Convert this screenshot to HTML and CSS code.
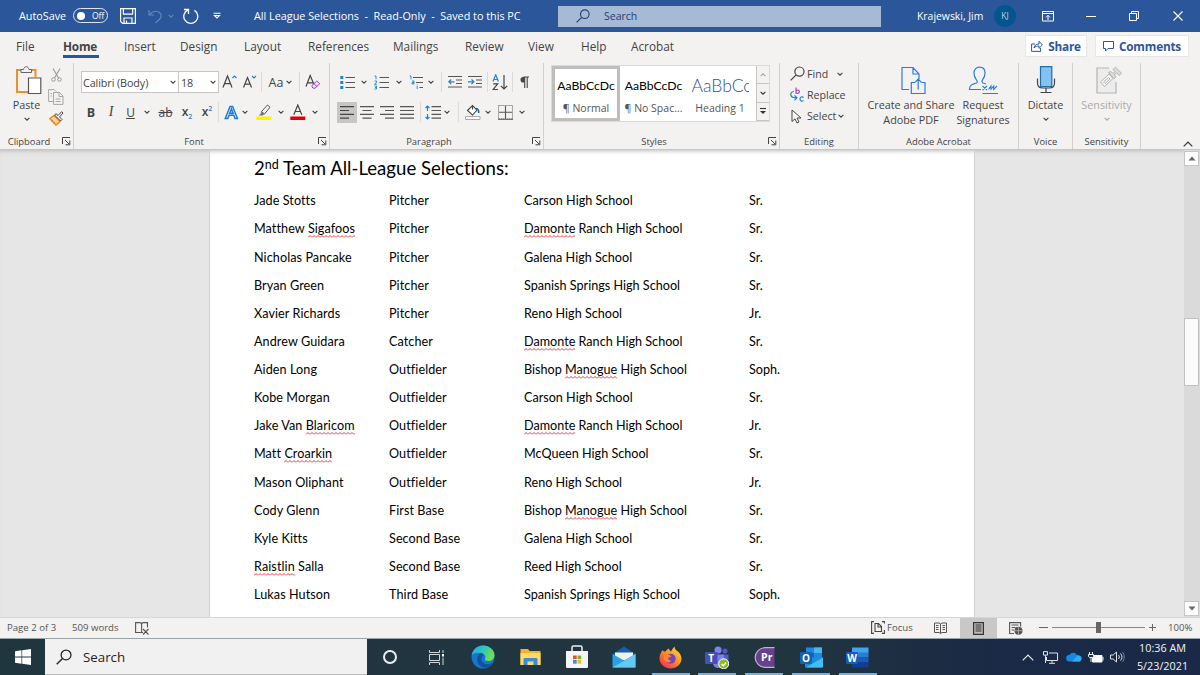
FILE: index.html
```html
<!DOCTYPE html>
<html lang="en">
<head>
    <meta charset="UTF-8">
    <meta name="viewport" content="width=device-width, initial-scale=1.0">
    <title>All League Selections - Word</title>
    <link rel="stylesheet" href="styles.css">
</head>
<body>
    <svg class="defs" width="0" height="0">
        <symbol id="chev" viewBox="0 0 6 6"><path d="M.6 1.8 3 4.2 5.4 1.8" fill="none" stroke="currentColor" stroke-width="1.1"/></symbol>
        <symbol id="launch" viewBox="0 0 9 9"><path d="M.5 7V.5H8M3 3l4 4M7.8 3.5v4.3H3.5" fill="none" stroke="#444" stroke-width="1"/></symbol>
        <symbol id="glass" viewBox="0 0 14 14"><circle cx="8.8" cy="5.2" r="4.3" fill="none" stroke="currentColor" stroke-width="1.1"/><path d="M5.7 8.3.6 13.4" stroke="currentColor" stroke-width="1.2"/></symbol>
    </svg>

    <header class="titlebar">
        <span class="autosave">AutoSave</span>
        <span class="toggle"><i></i>Off</span>
        <svg class="i-save" width="16" height="16" viewBox="0 0 16 16"><path d="M.6.6h14.8v14.8H2.6L.6 13.4zM3.4.6v5.6h9.2V.6M4 15.4V10h8v5.4M6.5 12.5v3" fill="none" stroke="#fff" stroke-width="1.2"/></svg>
        <svg class="i-undo" width="15" height="15" viewBox="0 0 15 15"><path d="M1 1v5h5M1.2 5.8C4 2.5 8 1.2 11 3.2c3 2.1 2.7 5 .5 7L7.5 14" fill="none" stroke="#6285ba" stroke-width="1.2"/></svg>
        <svg class="i-undochev" width="6" height="6"><use href="#chev"/></svg>
        <svg class="i-redo" width="16" height="17" viewBox="0 0 16 17"><path d="M1 1.5h4.5V6M5.3 1.8A7 7 0 1 0 11.5 2.4" fill="none" stroke="#fff" stroke-width="1.3"/></svg>
        <svg class="i-custom" width="8" height="8" viewBox="0 0 8 8"><path d="M.5 1.2h7M1.5 3.5 4 6l2.5-2.5z" fill="none" stroke="#fff" stroke-width="1.1"/></svg>
        <span class="doc-title">All League Selections&nbsp; -&nbsp; Read-Only&nbsp; -&nbsp; Saved to this PC</span>
        <div class="title-search"><svg width="14" height="14"><use href="#glass"/></svg><span>Search</span></div>
        <span class="user">Krajewski, Jim</span>
        <span class="avatar">KJ</span>
        <div class="window-buttons">
            <svg width="12" height="11" viewBox="0 0 12 11"><path d="M.5.5h11v9.5H.5zM.5 2.5h11M6 9V4.5M4 6.3l2-2 2 2" fill="none" stroke="#fff"/></svg>
            <svg width="10" height="10" viewBox="0 0 10 10"><path d="M0 5.5h10" stroke="#fff"/></svg>
            <svg width="10" height="10" viewBox="0 0 10 10"><path d="M.5 2.5h7v7h-7zM2.5 2.5v-2h7v7h-2" fill="none" stroke="#fff"/></svg>
            <svg width="10" height="10" viewBox="0 0 10 10"><path d="m.5.5 9 9m0-9-9 9" stroke="#fff" stroke-width="1.1"/></svg>
        </div>
    </header>

    <nav class="tabs">
        <span>File</span><span class="active">Home</span><span>Insert</span><span>Design</span><span>Layout</span><span>References</span><span>Mailings</span><span>Review</span><span>View</span><span>Help</span><span>Acrobat</span>
        <button class="share"><svg width="12" height="12" viewBox="0 0 12 12"><path d="M4 4H.6v7.4h9V8M3 8c.5-3 2.5-4 5-4V1.2L11.4 5 8 8.3V6C6 6 4.2 6.5 3 8z" fill="none" stroke="#2b579a"/></svg>Share</button>
        <button class="comments"><svg width="11" height="11" viewBox="0 0 11 11"><path d="M.5.5h10v7H5L2.5 10V7.5h-2z" fill="none" stroke="#2b579a"/></svg>Comments</button>
    </nav>

    <section class="ribbon">
        <div class="group clipboard">
            <div class="group-body">
                <div class="big paste">
                    <svg width="27" height="29" viewBox="0 0 27 29"><path d="M6.5 4H2v22h12M16 4h4.5v7" fill="none" stroke="#e8912d" stroke-width="2"/><path d="M6 6.5V3.5h2.5C9 1.5 10 .7 11.3.7S13.5 1.5 14 3.5h2.5v3z" fill="#f3f2f1" stroke="#666"/><path d="M13.5 12h12.3v15.5H13.5z" fill="#fff" stroke="#555" stroke-width="1.2"/></svg>
                    <span>Paste</span>
                    <svg width="6" height="6"><use href="#chev"/></svg>
                </div>
                <div class="clip-tools">
                    <svg width="11" height="14" viewBox="0 0 11 14"><path d="m2 .5 5.5 9.5M9 .5 3.5 10" stroke="#999" stroke-width="1.1"/><circle cx="2.5" cy="11.5" r="1.8" fill="none" stroke="#999"/><circle cx="8.5" cy="11.5" r="1.8" fill="none" stroke="#999"/></svg>
                    <svg width="16" height="16" viewBox="0 0 16 16"><path d="M5 12.5H.6V.6h5.500l2 2M5.500 3.500h6l3.500 3.600v8.300H5.500zM11 3.500v4h4M7.500 10h5M7.500 12.500h5M2.500 4.500H4M2.500 7H4" fill="none" stroke="#a6a6a6"/></svg>
                    <svg width="15" height="15" viewBox="0 0 15 15"><path d="M5 4.500.8 7.500 7 14l4-3.500z" fill="#fbd7a8" stroke="#ed8b1c" stroke-width="1.500"/><path d="m4 9-1.500 1M6 11l-1.500 1.300" stroke="#ed6c00"/><path d="m5.500 4 6 6 1.500-1.500L10.500 6l3.500-4-1.400-1.300L9 4.500 7 2.700z" fill="#f3f2f1" stroke="#444"/></svg>
                </div>
            </div>
            <footer><span>Clipboard</span><svg width="9" height="9"><use href="#launch"/></svg></footer>
        </div>

        <div class="group font">
            <div class="group-body">
                <div class="font-row1">
                    <div class="combo"><span>Calibri (Body)</span><svg width="6" height="6"><use href="#chev"/></svg></div>
                    <div class="combo"><span>18</span><svg width="6" height="6"><use href="#chev"/></svg></div>
                    <svg width="16" height="16" viewBox="0 0 16 16"><path d="m1 13.500 4.500-11.500 4.500 11.500M2.500 9.700h6" fill="none" stroke="#444" stroke-width="1.200"/><path d="m10.500 4 2-2 2 2" fill="none" stroke="#1e84d0" stroke-width="1.100"/></svg>
                    <svg width="16" height="16" viewBox="0 0 16 16"><path d="m1.500 13.500 4-10 4 10M2.900 10.200h5.200" fill="none" stroke="#444" stroke-width="1.200"/><path d="m10 2 2 2 2-2" fill="none" stroke="#1e84d0" stroke-width="1.100"/></svg>
                    <i class="sep"></i>
                    <div class="case"><span>Aa</span><svg width="6" height="6"><use href="#chev"/></svg></div>
                    <i class="sep"></i>
                    <svg width="16" height="16" viewBox="0 0 16 16"><path d="m1 12.500 4.200-11 4 9.500M2.500 8.800h5.500" fill="none" stroke="#444" stroke-width="1.200"/><path d="m7 11.500 4.800-4.500 3 2.700-4.800 4.500H8.200L7 13zM9 9.700l3 2.800" fill="#f3e5f7" stroke="#9b3fb5"/></svg>
                </div>
                <div class="font-row2">
                    <b>B</b><span class="ital">I</span><span class="under">U</span>
                    <svg width="6" height="6"><use href="#chev"/></svg>
                    <s>ab</s>
                    <span class="xs">x<sub>2</sub></span><span class="xs">x<sup>2</sup></span>
                    <i class="sep"></i>
                    <svg width="15" height="15" viewBox="0 0 15 15"><path d="M1.200 13.500 6 1.500h2.600l4.900 12H11l-1.200-3.200H5L3.800 13.500zM5.700 8.300h3.400L7.400 4z" fill="#cfe6f8" stroke="#1c7acc" stroke-width="1.400"/></svg>
                    <svg width="6" height="6"><use href="#chev"/></svg>
                    <svg width="16" height="16" viewBox="0 0 16 16"><path d="M.3 12.500h15V16H.3z" fill="#fff200"/><path d="m5.500 7.500 6-6.500 2.500 2.200L8.500 10z" fill="#f3f2f1" stroke="#555"/><path d="M5 7.500 8.500 10.300 6.500 11.500H2.800L4.800 9.500z" fill="#777"/></svg>
                    <svg width="6" height="6"><use href="#chev"/></svg>
                    <svg width="16" height="16" viewBox="0 0 16 16"><path d="M.3 12.500h15V16H.3z" fill="#e60000"/><path d="m3.800 10.700 4-9.700 4 9.700M5.200 7.500h5.200" fill="none" stroke="#444" stroke-width="1.200"/></svg>
                    <svg width="6" height="6"><use href="#chev"/></svg>
                </div>
            </div>
            <footer><span>Font</span><svg width="9" height="9"><use href="#launch"/></svg></footer>
        </div>

        <div class="group paragraph">
            <div class="group-body">
                <div class="para-row1">
                    <svg width="15" height="15" viewBox="0 0 15 15"><path d="M5.500 2.500H15M5.500 7.500H15M5.500 12.500H15" stroke="#555" stroke-width="1.200"/><path d="M.3 1h3v3h-3zM.3 6h3v3h-3zM.3 11h3v3h-3z" fill="#1e84d0"/></svg>
                    <svg width="6" height="6"><use href="#chev"/></svg>
                    <svg width="15" height="15" viewBox="0 0 15 15"><path d="M5.500 2.500H15M5.500 7.500H15M5.500 12.500H15" stroke="#555" stroke-width="1.200"/><path d="M.6 1H2v3.300M.5 6h2v1.500l-2 1.700h2.300M.5 11h2v3h-2M1 12.500h1.500" fill="none" stroke="#1e84d0" stroke-width=".9"/></svg>
                    <svg width="6" height="6"><use href="#chev"/></svg>
                    <svg width="15" height="15" viewBox="0 0 15 15"><path d="M4 2.500h10M7 7.500h7M10.500 12.500H14" stroke="#555" stroke-width="1.200"/><path d="M.6 1H2v3.300M3 6h2v3H3V7.500h2M8.200 11v3M8.200 9.500v.8" fill="none" stroke="#1e84d0" stroke-width=".9"/></svg>
                    <svg width="6" height="6"><use href="#chev"/></svg>
                    <i class="sep"></i>
                    <svg width="14" height="14" viewBox="0 0 14 14"><path d="M0 1.500h14M8 5h6M8 8.500h6M0 12h14" stroke="#555" stroke-width="1.200"/><path d="M6.500 6.800H1M3.200 4.500.8 6.800l2.400 2.300" fill="none" stroke="#1e84d0" stroke-width="1.200"/></svg>
                    <svg width="14" height="14" viewBox="0 0 14 14"><path d="M0 1.500h14M8 5h6M8 8.500h6M0 12h14" stroke="#555" stroke-width="1.200"/><path d="M0 6.800h5.500M3.500 4.500l2.400 2.300-2.400 2.300" fill="none" stroke="#1e84d0" stroke-width="1.200"/></svg>
                    <i class="sep"></i>
                    <svg width="16" height="17" viewBox="0 0 16 17"><path d="M1 7.500 3.700.8l2.700 6.700M2 5.500h3.500" fill="none" stroke="#1e84d0" stroke-width="1.200"/><path d="M1.200 9.800h4.500L1.200 15.500h4.800M12 1v14M8.800 11.800 12 15l3.200-3.200" fill="none" stroke="#444" stroke-width="1.200"/></svg>
                    <i class="sep"></i>
                    <svg width="9" height="13" viewBox="0 0 9 13"><path d="M4.500 1H3.300a2.600 2.600 0 0 0 0 5.600h1.200z" fill="#444"/><path d="M4.700 1v11M7.200 1v11M3.500 1H9" stroke="#444" stroke-width="1.100"/></svg>
                </div>
                <div class="para-row2">
                    <span class="pressed"><svg width="14" height="13" viewBox="0 0 14 13"><path d="M0 .7h14M0 4.500h9M0 8.300h14M0 12.100h9" stroke="#444" stroke-width="1.200"/></svg></span>
                    <svg width="14" height="13" viewBox="0 0 14 13"><path d="M0 .7h14M2.500 4.500h9M0 8.300h14M2.500 12.100h9" stroke="#555" stroke-width="1.200"/></svg>
                    <svg width="14" height="13" viewBox="0 0 14 13"><path d="M0 .7h14M5 4.500h9M0 8.300h14M5 12.100h9" stroke="#555" stroke-width="1.200"/></svg>
                    <svg width="14" height="13" viewBox="0 0 14 13"><path d="M0 .7h14M0 4.500h14M0 8.300h14M0 12.100h14" stroke="#555" stroke-width="1.200"/></svg>
                    <i class="sep"></i>
                    <svg width="16" height="15" viewBox="0 0 16 15"><path d="M6.500 1.700H16M6.500 5.500H16M6.500 9.300H16M6.500 13.100H16" stroke="#555" stroke-width="1.200"/><path d="M2.500 1v5M2.500 9v5M.5 3l2-2 2 2M.5 12l2 2 2-2" fill="none" stroke="#1e84d0" stroke-width="1.200"/></svg>
                    <svg width="6" height="6"><use href="#chev"/></svg>
                    <i class="sep"></i>
                    <svg width="16" height="16" viewBox="0 0 16 16"><path d="M.5 12.500h14.500V15.500H.5z" fill="#fff" stroke="#aaa"/><path d="m2.500 6.500 5-5 4.500 4.500-4.500 5zM7.500 5.500V1" fill="#fff" stroke="#444" stroke-width="1.100"/><path d="M11 4.500c2 0 3 2 2.700 4.500" fill="none" stroke="#1a6c8c" stroke-width="1.600"/></svg>
                    <svg width="6" height="6"><use href="#chev"/></svg>
                    <svg width="15" height="15" viewBox="0 0 15 15"><path d="M.5.500h14v13.500H.5z" fill="none" stroke="#777" stroke-dasharray="1.200 .8"/><path d="M7.500 1v13M1 7.300h13M0 14.300h15" stroke="#555" stroke-width="1.100"/></svg>
                    <svg width="6" height="6"><use href="#chev"/></svg>
                </div>
            </div>
            <footer><span>Paragraph</span><svg width="9" height="9"><use href="#launch"/></svg></footer>
        </div>

        <div class="group styles">
            <div class="group-body">
                <div class="gallery">
                    <div class="style selected"><span class="sample">AaBbCcDc</span><span class="name">¶ Normal</span></div>
                    <div class="style"><span class="sample">AaBbCcDc</span><span class="name">¶ No Spac...</span></div>
                    <div class="style heading"><span class="sample">AaBbCc</span><span class="name">Heading 1</span></div>
                    <div class="gallery-scroll">
                        <span class="dim"><svg class="up" width="6" height="6"><use href="#chev"/></svg></span>
                        <span><svg width="6" height="6"><use href="#chev"/></svg></span>
                        <span><svg width="8" height="8" viewBox="0 0 8 8"><path d="M1 1.500h6" stroke="#333" stroke-width="1.100"/><path d="M1 4h6L4 7z" fill="#333"/></svg></span>
                    </div>
                </div>
            </div>
            <footer><span>Styles</span><svg width="9" height="9"><use href="#launch"/></svg></footer>
        </div>

        <div class="group editing">
            <div class="group-body">
                <div><svg width="15" height="15"><use href="#glass"/></svg><span>Find</span><svg class="far" width="6" height="6"><use href="#chev"/></svg></div>
                <div><svg width="15" height="15" viewBox="0 0 15 15"><path d="M6 .5v6.300M6 4a1.800 1.600 0 1 1 0 1.500" fill="none" stroke="#b146c2" stroke-width="1.200"/><path d="M13.500 10.500c-1.500-1.300-3.500-.5-3.500 1.500s2 2.800 3.500 1.500M4 4.500C1 4.500.5 7 1 8.500c.5 2 3 2.300 5.500 2.300M4.500 8.300 7 10.800l-2.500 2.500" fill="none" stroke="#1e84d0" stroke-width="1.200"/></svg><span>Replace</span></div>
                <div><svg width="15" height="15" viewBox="0 0 15 15"><path d="M2 1v11.500l3-2.700 2 4.200 2-1-2-4h4z" fill="#fff" stroke="#444"/></svg><span>Select</span><svg width="6" height="6"><use href="#chev"/></svg></div>
            </div>
            <footer><span>Editing</span></footer>
        </div>

        <div class="group acrobat">
            <div class="group-body">
                <div class="big create">
                    <svg width="25" height="29" viewBox="0 0 25 29"><path d="M8 23.500H1V1.500h11l6 6.500v5M12 1.500V8h6M14 16.500h-3.700v11H24v-11h-3.700M17.200 23.500v-10M14 16.300l3.200-3.200 3.200 3.200" fill="none" stroke="#2c7be5" stroke-width="1.200"/></svg>
                    <span>Create and Share<br>Adobe PDF</span>
                </div>
                <div class="big request">
                    <svg width="31" height="29" viewBox="0 0 31 29"><path d="M13 23.500H1.500c0-5 3-5 7-6.500 1-.5 1-2-.2-3.300C7 12 6 10 6 7c0-3.500 2-5.800 5.500-5.800S17 3.500 17 7s-1 5-2.400 6.700c-1 1.300-.8 2.800.4 3.300l3 1" fill="none" stroke="#2c7be5" stroke-width="1.200"/><path d="m14.500 20 4.500 4m0-4-4.500 4M20.500 23.500l2.500-3.500v3.300l2.700-3.300v3.300l3.300-3.300M14.500 27.500H30" fill="none" stroke="#2c7be5" stroke-width="1.100"/></svg>
                    <span>Request<br>Signatures</span>
                </div>
            </div>
            <footer><span>Adobe Acrobat</span></footer>
        </div>

        <div class="group voice">
            <div class="group-body">
                <div class="big">
                    <svg width="20" height="29" viewBox="0 0 20 29"><path d="M1.500 12.500v4.500c0 3 2 5 5 5h7c3 0 5-2 5-5v-4.500M10 22v4M4.500 26.500h11" fill="none" stroke="#444" stroke-width="1.200"/><path d="M4.500.7h11.300v20H4.500z" fill="#83c3ee" stroke="#1e6fad" stroke-width="1.200"/></svg>
                    <span>Dictate</span>
                    <svg width="6" height="6"><use href="#chev"/></svg>
                </div>
            </div>
            <footer><span>Voice</span></footer>
        </div>

        <div class="group sensitivity">
            <div class="group-body">
                <div class="big">
                    <svg width="27" height="29" viewBox="0 0 27 29"><path d="M13 2H1v25h19V16" fill="#ececec" stroke="#b3b3b3" stroke-width="1.200"/><path d="m4.500 16 8.500-8 4 4.500-8.500 8zM7.500 16l5-4.500 1.500 1.500-5 4.500z" fill="#f7f7f7" stroke="#b3b3b3"/><path d="m12.500 6.500 5.500 6 2-1.800-1.500-2 2-2 2.500 2.800 2.500-2.300-6-6-2.500 2.300 2 2-2 2-2-2z" fill="#ddd" stroke="#b3b3b3"/></svg>
                    <span>Sensitivity</span>
                    <svg width="6" height="6"><use href="#chev"/></svg>
                </div>
            </div>
            <footer><span>Sensitivity</span></footer>
        </div>
        <svg class="collapse" width="10" height="6" viewBox="0 0 10 6"><path d="m.7 5.300 4.300-4.300 4.300 4.300" fill="none" stroke="#333" stroke-width="1.200"/></svg>
    </section>

    <main class="workspace">
        <article class="page">
            <h1>2<sup>nd</sup> Team All-League Selections:</h1>
            <div class="roster">
                <div><span>Jade Stotts</span><span>Pitcher</span><span>Carson High School</span><span>Sr.</span></div>
                <div><span>Matthew <u>Sigafoos</u></span><span>Pitcher</span><span><u>Damonte</u> Ranch High School</span><span>Sr.</span></div>
                <div><span>Nicholas Pancake</span><span>Pitcher</span><span>Galena High School</span><span>Sr.</span></div>
                <div><span>Bryan Green</span><span>Pitcher</span><span>Spanish Springs High School</span><span>Sr.</span></div>
                <div><span>Xavier Richards</span><span>Pitcher</span><span>Reno High School</span><span>Jr.</span></div>
                <div><span>Andrew Guidara</span><span>Catcher</span><span><u>Damonte</u> Ranch High School</span><span>Sr.</span></div>
                <div><span>Aiden Long</span><span>Outfielder</span><span>Bishop <u>Manogue</u> High School</span><span>Soph.</span></div>
                <div><span>Kobe Morgan</span><span>Outfielder</span><span>Carson High School</span><span>Sr.</span></div>
                <div><span>Jake Van <u>Blaricom</u></span><span>Outfielder</span><span><u>Damonte</u> Ranch High School</span><span>Jr.</span></div>
                <div><span>Matt <u>Croarkin</u></span><span>Outfielder</span><span>McQueen High School</span><span>Sr.</span></div>
                <div><span>Mason Oliphant</span><span>Outfielder</span><span>Reno High School</span><span>Jr.</span></div>
                <div><span>Cody Glenn</span><span>First Base</span><span>Bishop <u>Manogue</u> High School</span><span>Sr.</span></div>
                <div><span>Kyle Kitts</span><span>Second Base</span><span>Galena High School</span><span>Sr.</span></div>
                <div><span><u>Raistlin</u> Salla</span><span>Second Base</span><span>Reed High School</span><span>Sr.</span></div>
                <div><span>Lukas Hutson</span><span>Third Base</span><span>Spanish Springs High School</span><span>Soph.</span></div>
            </div>
        </article>
        <div class="scrollbar">
            <span class="arrow"><svg width="8" height="5"><path d="M.5 4.500 4 .5l3.500 4z" fill="#666"/></svg></span>
            <span class="thumb"></span>
            <span class="arrow"><svg width="8" height="5"><path d="M.5.5 4 4.500 7.500.5z" fill="#666"/></svg></span>
        </div>
    </main>

    <div class="statusbar">
        <span class="pages">Page 2 of 3</span>
        <span class="words">509 words</span>
        <svg class="proof" width="14" height="13" viewBox="0 0 14 13"><path d="M8 10.500H.6V.6h4c1.500 0 2 .6 2 1.500v8M6.600 2.100c0-1 .6-1.500 2-1.500H12.500V5.500M8 7l5.500 5.500m0-5.500L8 12.500" fill="none" stroke="#555" stroke-width="1.100"/></svg>
        <span class="focus"><svg width="14" height="13" viewBox="0 0 14 13"><path d="M3 .6H.6V12.400H3M11 .6h2.400v2M13.400 9v3.400H11M4 2.500h3.500L10.500 5.500v5H4zM7 2.500V6h3.500" fill="none" stroke="#444" stroke-width="1.100"/></svg>Focus</span>
        <svg class="read" width="13" height="12" viewBox="0 0 13 12"><path d="M.5 1h4.500l1.500.8L8 1h4.500v9.500H8l-1.500 1-1.500-1H.5zM6.500 2v9M2 3.500h2.500M2 5.500h2.500M2 7.500h2.500M8.500 3.500H11M8.500 5.500H11M8.500 7.500H11" fill="none" stroke="#555"/></svg>
        <span class="print"><svg width="11" height="13" viewBox="0 0 11 13"><path d="M.6.6h9.800v11.800H.6z" fill="#bbb" stroke="#333" stroke-width="1.200"/><path d="M2.500 3h6M2.500 5h6M2.500 7h6M2.500 9h6" stroke="#333" stroke-width="1.200"/></svg></span>
        <svg class="web" width="14" height="13" viewBox="0 0 14 13"><path d="M5 11.500H.6V.6h11v4M2.500 3h7M2.500 5.500h4M2.500 8h2.500" fill="none" stroke="#555" stroke-width="1.100"/><circle cx="9.500" cy="8.700" r="4" fill="#555"/><path d="M5.500 8.700h8M9.500 4.700v8" stroke="#bbb" stroke-width=".7"/></svg>
        <span class="zoom">
            <svg width="9" height="9"><path d="M0 4.500h9" stroke="#666"/></svg>
            <span class="slider"><i></i></span>
            <svg width="7" height="7"><path d="M0 3.500h7M3.500 0v7" stroke="#666"/></svg>
        </span>
        <span class="percent">100%</span>
    </div>

    <div class="taskbar">
        <span class="start"><svg width="16" height="16" viewBox="0 0 16 16"><path d="M0 2.300 6.500 1.300V7.600H0zM7.200 1.200 16 0v7.600H7.200zM0 8.400h6.500v6.300L0 13.700zM7.200 8.400H16V16l-8.800-1.200z" fill="#fff"/></svg></span>
        <div class="task-search"><svg width="16" height="16"><use href="#glass"/></svg><span>Search</span></div>
        <div class="apps">
            <span><svg width="16" height="16"><circle cx="8" cy="8" r="6" fill="none" stroke="#eee" stroke-width="2"/></svg></span>
            <span><svg width="16" height="15" viewBox="0 0 16 15"><path d="M.5 0v2.500h10V0M.5 15v-2.500h10V15M.5 4.500h10v6H.5zM14 0v3M14 7.500V15" fill="none" stroke="#cfd6d9"/><path d="M13 4h2v2.500h-2z" fill="#fff"/></svg></span>
            <span><svg width="24" height="24" viewBox="0 0 24 24"><defs><linearGradient id="eg" x1="0" y1="0" x2="1" y2=".4"><stop offset="0" stop-color="#2aa5e0"/><stop offset=".5" stop-color="#2cc4c4"/><stop offset="1" stop-color="#6fe04b"/></linearGradient></defs><circle cx="12" cy="12" r="11.500" fill="#1277cf"/><path d="M.8 10C2 4 6.500.5 12 .5c6.500 0 11.500 4.500 11.500 9.500 0 4-3 6-6 6s-4-1-3.500-2.300c.8-1 .8-5.200-4-5.700C6 7.500 2.500 8.500.8 10z" fill="url(#eg)"/><path d="M10 8c-4 2-5 7-2.500 11 2 3 6 4.500 9 3.500 2-.7 4-2.500 5-4.500-4 2-8 1.500-10-1-2-2.600-1-5 .8-6.500C12 9 11 8.200 10 8z" fill="#12519d"/></svg></span>
            <span><svg width="21" height="18" viewBox="0 0 21 18"><path d="M.5 1H8l1.500 2h11v14H.5z" fill="#f0b429"/><path d="M.5 5h20v12H.5z" fill="#ffd970"/><path d="M3.500 17v-5.500c0-1 .5-1.500 1.500-1.500h11c1 0 1.500.5 1.500 1.500V17h-4v-3.500h-6V17z" fill="#3c8cd0"/></svg></span>
            <span><svg width="24" height="24" viewBox="0 0 24 24"><path d="M7 6V2.500C7 1.500 7.500 1 8.500 1h7c1 0 1.500.5 1.500 1.500V6" fill="none" stroke="#eee" stroke-width="1.500"/><path d="M1 6h22v15.500c0 1-.5 1.500-1.500 1.500h-19C1.500 23 1 22.500 1 21.500z" fill="#f5f5f5"/><path d="M8 10.500h3.700v3.700H8z" fill="#e8502a"/><path d="M12.500 10.500h3.700v3.700h-3.700z" fill="#7cb526"/><path d="M8 15h3.700v3.700H8z" fill="#2a9be0"/><path d="M12.500 15h3.700v3.700h-3.700z" fill="#f5b91d"/></svg></span>
            <span><svg width="24" height="22" viewBox="0 0 24 22"><path d="M.5 8 12 .5 23.500 8v3H.5z" fill="#155fae"/><path d="M3 6.500h18V14H3z" fill="#f1f1ee"/><path d="M.5 8 12 14.500l11.500-6.500V21.500H.5z" fill="#29a1e8"/><path d="m.5 21.500 23-13.500v13.500z" fill="#64c8f5"/></svg></span>
            <span class="open"><svg width="23" height="23" viewBox="0 0 23 23"><defs><linearGradient id="ff" x1="1" y1="0" x2=".2" y2="1"><stop offset="0" stop-color="#ffe840"/><stop offset=".45" stop-color="#ff9a22"/><stop offset="1" stop-color="#f22d59"/></linearGradient></defs><path d="M3.500 4c.5 1 1.500 1.500 3 1.500C7.500 4 8.500 3 10 2.500c0 1.300.8 2 2 3C13 4 13.500 2.500 15.500.5c0 2 1 3 2 4C19 5.500 22.500 8 22.500 13S17.500 22.500 11.500 22.500.5 18 .5 12.500c0-3.500 1-5 3-8.500z" fill="url(#ff)"/><circle cx="11.700" cy="12.800" r="5" fill="#7643c9"/><path d="M5 9c3-2 6 0 7.500 1.500l-3 1c-1 1.500.5 3.500 3 3-2 3-7 2-7.500-2z" fill="#ff8a24"/></svg></span>
            <span class="open"><svg width="24" height="23" viewBox="0 0 24 23"><circle cx="13" cy="4" r="3.600" fill="#7b83eb"/><circle cx="20" cy="5" r="2.500" fill="#5059c9"/><path d="M16 8.500h7.500v7c0 3-2 4-4 4z" fill="#5059c9"/><path d="M8 8.500h11V17c0 3.500-2.500 5-5.500 5S8 20 8 17z" fill="#7b83eb"/><rect x="0" y="6" width="12.500" height="12" rx="1" fill="#464eb8"/><text x="6.200" y="15.500" text-anchor="middle" class="logo">T</text><circle cx="18.700" cy="17.800" r="5" fill="#8cbd18" stroke="#fff"/><path d="m16.500 18 1.700 1.700 3-3.200" fill="none" stroke="#fff" stroke-width="1.300"/></svg></span>
            <span class="open"><svg width="21" height="21" viewBox="0 0 21 21"><path d="M20.500.7H11A9.800 9.800 0 0 0 11 20.300h9.500z" fill="#66418c"/><path d="M20.500.7H11A9.800 9.800 0 0 0 11 20.300h9.500" fill="none" stroke="#c8afd6" stroke-width="1.200"/><text x="12.800" y="14.300" text-anchor="middle" class="logo pr">Pr</text></svg></span>
            <span class="open outlook"><svg width="23" height="21" viewBox="0 0 23 21"><path d="M6 .5h16v11H6z" fill="#1c8ae0"/><path d="M14 .5h8V6h-8z" fill="#4db4f2"/><path d="M6 6h8v5.500H6z" fill="#1467b5"/><path d="M5 10.500h18v8.500c0 1-.5 1.500-1.500 1.500H5z" fill="#1b8ddf"/><path d="m23 10.500-17 10h15.500c1 0 1.500-.5 1.500-1.500z" fill="#45bcf2"/><rect x="0" y="5" width="12" height="12" rx="1" fill="#0f62b4"/><text x="6" y="14.600" text-anchor="middle" class="logo">O</text></svg></span>
            <span class="open"><svg width="23" height="21" viewBox="0 0 23 21"><path d="M6 .5h16.500V6H6z" fill="#41a5ee"/><path d="M6 5.500h16.500v5H6z" fill="#2b7cd3"/><path d="M6 10.500h16.500v5H6z" fill="#185abd"/><path d="M6 15.500h16.500v5H6z" fill="#103f91"/><rect x="0" y="5" width="12" height="12" rx="1" fill="#185abd"/><text x="6" y="14.500" text-anchor="middle" class="logo">W</text></svg></span>
        </div>
        <div class="tray">
            <svg width="12" height="7" viewBox="0 0 12 7"><path d="m.7 6.300 5.300-5.300 5.300 5.300" fill="none" stroke="#e6e9ed" stroke-width="1.200"/></svg>
            <svg width="15" height="13" viewBox="0 0 15 13"><path d="M6 2h8.500v7.500H3.500V6M9 9.500v2.500M6 12.300h6M.5.600h4v3.500h-4zM2.500 4v8" fill="none" stroke="#dfe3e8"/></svg>
            <svg width="16" height="10" viewBox="0 0 16 10"><path d="M3.500 9.500a3.200 3.200 0 0 1-.3-6.400C4.500.8 8.500-.7 11 3c3 0 4.700 1.500 4.500 3.700-.2 2-1.500 2.800-3 2.800z" fill="#1688df"/><path d="m6 9.500 5.500-6C14 3.300 15.700 4.500 15.500 6.700c-.2 2-1.500 2.800-3 2.800z" fill="#35a9f2"/></svg>
            <svg width="16" height="11" viewBox="0 0 16 11"><path d="M4.500 3.500h9.500v6.500H4.500z" fill="#fff" stroke="#fff"/><path d="M15 5v3.500M1.500 0v2.500M4.500 0v2.500M.5 2.500h5v2c0 1.500-5 1.500-5 0zM3 6v4" stroke="#e6e9ed" fill="#22324d"/></svg>
            <svg width="15" height="12" viewBox="0 0 15 12"><path d="M.5 4h2.700L6.500 1v10L3.200 8H.5zM8.500 4c1 1.200 1 2.800 0 4M10.500 2.500c2 2 2 5 0 7" fill="none" stroke="#dfe3e8"/><path d="M12.500 1c2.300 2.800 2.300 7.200 0 10" fill="none" stroke="#78849a"/></svg>
        </div>
        <div class="clock"><span>10:36 AM</span><span>5/23/2021</span></div>
    </div>
</body>
</html>
```

FILE: styles.css
```css
* {
    box-sizing: border-box;
}
body {
    margin: 0;
    width: 1200px;
    height: 675px;
    overflow: hidden;
    display: grid;
    grid-template-rows: 32px 31px 87px 467px 21px 37px;
    font-family: "Open Sans", "Noto Sans", sans-serif;
    color: #444;
    background-color: #e6e6e6;
    white-space: nowrap;
}
svg {
    display: block;
    flex: none;
}
.defs {
    position: absolute;
}
i {
    font-style: normal;
}

/* title bar */
.titlebar {
    display: grid;
    grid-template-columns: 54px 47px 28px 20px 15px 30px 41px 304px 359px 66px 43px 171px;
    padding-left: 19px;
    align-items: center;
    background-color: #2b579a;
    color: #fff;
    font-size: 10.8px;
    line-height: 14px;
}
.titlebar > span {
    margin-top: -1px;
}
.titlebar .user {
    font-size: 10.4px;
    margin-top: 0;
}
.toggle {
    width: 35px;
    height: 15px;
    border: 1px solid #dfe6f1;
    border-radius: 8px;
    display: flex;
    align-items: center;
    gap: 7px;
    padding-left: 3px;
    font-size: 8.5px;
}
.toggle i {
    width: 8px;
    height: 8px;
    border-radius: 50%;
    background-color: #fff;
}
.i-undochev {
    color: #6285ba;
}
.title-search {
    width: 323px;
    height: 21px;
    background-color: #a6b9d5;
    color: #1f3f75;
    display: flex;
    align-items: center;
    gap: 14px;
    padding-left: 18px;
    font-size: 10.5px;
}
.avatar {
    width: 22px;
    height: 22px;
    border-radius: 50%;
    background-color: #01568f;
    color: #b9d3ea;
    font-size: 8.5px;
    line-height: 22px;
    text-align: center;
    margin-left: 11px;
}
.window-buttons {
    display: grid;
    grid-template-columns: repeat(4, 43.3px);
    justify-items: center;
    align-items: center;
}

/* ribbon tabs */
.tabs {
    display: grid;
    grid-template-columns: 47px 61px 56px 64px 64px 85px 72px 63px 53px 50px 394px 70px 94px;
    padding-left: 16px;
    background-color: #f3f2f1;
    font-size: 11.8px;
    line-height: 29px;
}
.tabs .active {
    font-weight: 700;
    letter-spacing: -0.2px;
    width: 36px;
    height: 26px;
    border-bottom: 3px solid #2b579a;
}
.tabs button {
    height: 22px;
    margin-top: 3px;
    padding: 0;
    border: 1px solid #e6e6e6;
    background-color: #fff;
    color: #2b579a;
    font: 700 11.8px "Open Sans", sans-serif;
    letter-spacing: -0.2px;
    display: flex;
    align-items: center;
    justify-content: center;
    gap: 5px;
}
.share {
    width: 62px;
}

/* ribbon */
.ribbon {
    display: flex;
    background-color: #f3f2f1;
    border-bottom: 1px solid #c8c6c4;
    font-size: 10.8px;
}
.group {
    display: flex;
    flex-direction: column;
    border-right: 1px solid #d2d0ce;
    padding-bottom: 1px;
}
.group-body {
    flex: 1;
}
.group footer {
    height: 14px;
    display: flex;
    align-items: center;
    justify-content: center;
    font-size: 9.4px;
}
.group footer span {
    flex: 1;
    text-align: center;
}
.group footer svg {
    margin: 0 2px 0 4px;
}
.sep {
    width: 1px;
    height: 20px;
    background-color: #dcdad8;
}
.clipboard { width: 74px; }
.font { width: 256px; }
.paragraph { width: 214px; }
.styles { width: 236px; }
.editing { width: 79px; }
.acrobat { width: 160px; }
.voice { width: 54px; }
.sensitivity { width: 68px; }

.big {
    display: flex;
    flex-direction: column;
    align-items: center;
    text-align: center;
    line-height: 15px;
    padding-top: 3px;
}
.big > svg:first-child {
    margin-bottom: 2px;
}
.big span + svg {
    margin-top: 4px;
}
.clipboard .group-body {
    display: flex;
}
.paste {
    width: 45px;
    padding-left: 8px;
}
.paste > svg:first-child {
    margin-left: 4px;
}
.clip-tools {
    width: 22px;
    display: grid;
    grid-template-rows: 22px 22px 21px;
    padding-top: 1px;
    justify-items: center;
    align-items: center;
}
.font .group-body {
    padding: 4px 0 0 7px;
}
.font-row1, .font-row2, .para-row1, .para-row2 {
    display: grid;
    height: 30px;
    align-items: center;
    justify-items: center;
}
.font-row1 {
    grid-template-columns: 98px 40px 21px 20px 3px 35px 3px 24px;
}
.combo {
    width: 100%;
    height: 22px;
    border: 1px solid #c8c6c4;
    background-color: #fff;
    display: flex;
    align-items: center;
    justify-content: space-between;
    padding: 0 2px 0 1px;
    letter-spacing: -0.1px;
}
.combo + .combo {
    border-left: 0;
    padding-left: 2px;
}
.case {
    display: flex;
    align-items: center;
    gap: 3px;
    font-size: 12.5px;
}
.font-row2 {
    grid-template-columns: 20px 20px 19px 14px 23px 20px 20px 2px 24px 4px 33px 2px 32px 2px;
    font-size: 12px;
}
.font-row2 b {
    font-size: 12.5px;
}
.ital {
    font-family: "Liberation Serif", serif;
    font-style: italic;
    font-size: 14px;
}
.under {
    text-decoration: underline;
}
.xs {
    font-weight: 600;
    font-size: 12px;
    line-height: 14px;
}
.xs sub, .xs sup {
    font-size: 7px;
    color: #1e84d0;
    line-height: 0;
}
.paragraph .group-body {
    padding: 4px 0 0 7px;
}
.para-row1 {
    grid-template-columns: 20px 14px 20px 15px 20px 9px 13px 14px 25px 1px 23px 2px 22px;
}
.para-row2 {
    grid-template-columns: 20px 20px 20px 20px 6px 19px 10px 12px 17px 13px 23px 10px;
}
.pressed {
    width: 20px;
    height: 21px;
    background-color: #c8c6c4;
    display: grid;
    place-items: center;
}
.gallery {
    margin: 2px 0 0 7px;
    width: 219px;
    height: 57px;
    display: grid;
    grid-template-columns: 68px 67px 69px 13px;
    background-color: #fff;
    border: 1px solid #dcdad8;
}
.style {
    overflow: hidden;
    padding: 9px 0 0;
    display: flex;
    flex-direction: column;
    align-items: center;
    border: 3px solid transparent;
}
.style.selected {
    border-color: #c0bebc;
}
.style.heading {
    padding-right: 3px;
}
.sample {
    font-family: Lato, sans-serif;
    font-size: 12.2px;
    line-height: 16px;
    height: 23px;
    color: #000;
}
.name {
    line-height: 14px;
    font-size: 10.5px;
    color: #555;
}
.heading .sample {
    font-size: 17.5px;
    font-weight: 300;
    color: #2f5496;
    width: 57px;
    overflow: hidden;
}
.gallery-scroll {
    display: grid;
    grid-template-rows: repeat(3, 1fr);
    background-color: #f3f2f1;
    border-left: 1px solid #c8c6c4;
}
.gallery-scroll span {
    display: grid;
    place-items: center;
    border-bottom: 1px solid #c8c6c4;
    color: #333;
}
.gallery-scroll .dim {
    color: #aaa;
}
.up {
    transform: rotate(180deg);
}
.editing .group-body div {
    display: flex;
    align-items: center;
    gap: 2px;
    height: 21.3px;
    padding-left: 10px;
    font-size: 10.6px;
}
.far {
    margin-left: 7px;
}
.acrobat .group-body {
    display: flex;
    padding-left: 1px;
}
.create {
    width: 102px;
}
.create > svg:first-child {
    margin-left: 5px;
}
.request {
    width: 42px;
}
.sensitivity .big {
    color: #aaa;
}
.sensitivity .big > svg:first-child {
    margin-left: 5px;
}
.collapse {
    margin: 78px 0 0 42px;
}

/* document */
.workspace {
    display: flex;
    justify-content: space-between;
    background-color: #e6e6e6;
    box-shadow: inset 0 4px 4px -3px #bbb;
    overflow: hidden;
}
.page {
    width: 766px;
    margin-left: 209px;
    padding: 4px 0 0 44px;
    background-color: #fff;
    border: solid #d4d4d4;
    border-width: 0 1px;
    box-shadow: inset 0 4px 4px -3px #bbb;
    font-family: Lato, sans-serif;
    font-variant-ligatures: none;
    color: #000;
}
.page h1 {
    margin: 0;
    font-size: 18.6px;
    font-weight: 400;
    line-height: 28px;
    height: 33.3px;
}
.page sup {
    font-size: 12.5px;
    line-height: 0;
    vertical-align: 6px;
}
.roster div {
    display: grid;
    grid-template-columns: 135px 135px 225px 60px;
    height: 28.13px;
    line-height: 28px;
    font-size: 12.62px;
}
.roster span:nth-child(-n+2) {
    letter-spacing: 0.08px;
}
/* spelling squiggle */
.roster u {
    text-decoration: none;
    padding-bottom: 2px;
    background: url("data:image/svg+xml,%3Csvg xmlns='http://www.w3.org/2000/svg' width='4' height='3'%3E%3Cpath d='M0 2.500 2 .5 4 2.500' fill='none' stroke='%23e8383d' stroke-width='1'/%3E%3C/svg%3E") left bottom repeat-x;
}
.scrollbar {
    width: 16px;
    padding-top: 1px;
    background-color: #dadada;
    display: flex;
    flex-direction: column;
}
.arrow {
    width: 15px;
    height: 15px;
    background-color: #fff;
    border: 1px solid #c6c6c6;
    display: grid;
    place-items: center;
}
.thumb {
    width: 15px;
    height: 68px;
    margin: 152px 0 215px;
    background-color: #fbfbfb;
    border: 1px solid #c0c0c0;
}

/* status bar */
.statusbar {
    display: grid;
    grid-template-columns: 65px 63px 736px 63px 26px 49px 33px 126px 32px;
    padding-left: 7px;
    align-items: center;
    background-color: #f3f2f1;
    border-top: 1px solid #d8d6d4;
    font-size: 9.6px;
    line-height: 13px;
    color: #555;
}
.statusbar > span:not(.print) {
    margin-top: -1px;
}
.focus {
    display: flex;
    align-items: center;
    gap: 2px;
}
.print {
    width: 37px;
    height: 20px;
    background-color: #cac8c6;
    display: grid;
    place-items: center;
}
.zoom {
    display: flex;
    align-items: center;
    gap: 4px;
    margin-left: -3px;
}
.slider {
    width: 93px;
    height: 11px;
    display: grid;
    place-items: center;
    background: linear-gradient(#888, #888) center / 100% 1px no-repeat;
}
.slider i {
    width: 5px;
    height: 11px;
    background-color: #666;
}

/* taskbar */
.taskbar {
    display: grid;
    grid-template-columns: 45px 322px 515px 245px 73px;
    background: linear-gradient(90deg, #20363f 0%, #21353f 65%, #1a2a45 82%, #1b2848 100%);
    border-top: 1px solid #9aa3a8;
    color: #f2f4f6;
}
.start {
    display: grid;
    place-items: center;
}
.task-search {
    display: flex;
    align-items: center;
    gap: 11px;
    padding-left: 11px;
    background-color: #f1f1f1;
    border-bottom: 1px solid #b9b9b9;
    color: #222;
    font-size: 13.3px;
}
.apps {
    display: grid;
    grid-template-columns: repeat(11, 46.8px);
    margin-left: -0.5px;
    padding-bottom: 0;
}
.apps span {
    display: grid;
    place-items: center;
}
.open {
    background: linear-gradient(#76b0de, #76b0de) center bottom / 38px 2px no-repeat;
}
.logo {
    font: 700 10px "Open Sans", sans-serif;
    fill: #fff;
}
.logo.pr {
    font-size: 10.5px;
}
.tray {
    display: grid;
    grid-template-columns: 20px 25px 21px 24px 19px;
    align-items: center;
    justify-items: center;
    justify-content: end;
}
.clock {
    display: flex;
    flex-direction: column;
    align-items: center;
    justify-content: center;
    font-size: 10.8px;
    line-height: 17.5px;
    padding-right: 2px;
    margin-top: -1px;
}
```
